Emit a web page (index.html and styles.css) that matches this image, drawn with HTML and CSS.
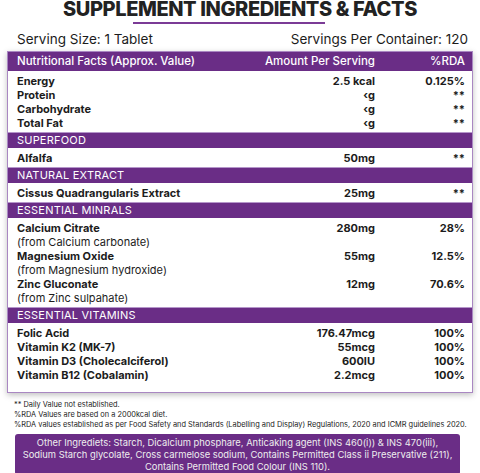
FILE: index.html
```html
<!DOCTYPE html>
<html lang="en">
<head>
    <meta charset="UTF-8">
    <meta name="viewport" content="width=device-width, initial-scale=1.0">
    <title>Supplement Facts</title>
    <link rel="stylesheet" href="styles.css">
</head>
<body>

<div class="page">
    <h1 class="title">SUPPLEMENT INGREDIENTS &amp; FACTS</h1>
    <div class="title-line"></div>

    <div class="serving">
        <span>Serving Size: 1 Tablet</span>
        <span>Servings Per Container: 120</span>
    </div>

    <div class="facts">
        <div class="head row">
            <span>Nutritional Facts (Approx. Value)</span>
            <span class="amt">Amount Per Serving</span>
            <span class="rda">%RDA</span>
        </div>

        <div class="group">
            <div class="row"><span>Energy</span><span class="amt">2.5 kcal</span><span class="rda">0.125%</span></div>
            <div class="row"><span>Protein</span><span class="amt">&lsaquo;g</span><span class="rda">**</span></div>
            <div class="row"><span>Carbohydrate</span><span class="amt">&lsaquo;g</span><span class="rda">**</span></div>
            <div class="row"><span>Total Fat</span><span class="amt">&lsaquo;g</span><span class="rda">**</span></div>
        </div>

        <div class="section">SUPERFOOD</div>
        <div class="group">
            <div class="row"><span>Alfalfa</span><span class="amt">50mg</span><span class="rda">**</span></div>
        </div>

        <div class="section">NATURAL EXTRACT</div>
        <div class="group">
            <div class="row"><span>Cissus Quadrangularis Extract</span><span class="amt">25mg</span><span class="rda">**</span></div>
        </div>

        <div class="section">ESSENTIAL MINRALS</div>
        <div class="group">
            <div class="row"><span>Calcium Citrate</span><span class="amt">280mg</span><span class="rda">28%</span></div>
            <div class="row sub"><span>(from Calcium carbonate)</span></div>
            <div class="row"><span>Magnesium Oxide</span><span class="amt">55mg</span><span class="rda">12.5%</span></div>
            <div class="row sub"><span>(from Magnesium hydroxide)</span></div>
            <div class="row"><span>Zinc Gluconate</span><span class="amt">12mg</span><span class="rda">70.6%</span></div>
            <div class="row sub"><span>(from Zinc sulpahate)</span></div>
        </div>

        <div class="section">ESSENTIAL VITAMINS</div>
        <div class="group last">
            <div class="row"><span>Folic Acid</span><span class="amt">176.47mcg</span><span class="rda">100%</span></div>
            <div class="row"><span>Vitamin K2 (MK-7)</span><span class="amt">55mcg</span><span class="rda">100%</span></div>
            <div class="row"><span>Vitamin D3 (Cholecalciferol)</span><span class="amt">600IU</span><span class="rda">100%</span></div>
            <div class="row"><span>Vitamin B12 (Cobalamin)</span><span class="amt">2.2mcg</span><span class="rda">100%</span></div>
        </div>
    </div>

    <div class="notes">
        <p>** Daily Value not established.</p>
        <p>%RDA Values are based on a 2000kcal diet.</p>
        <p>%RDA values established as per Food Safety and Standards (Labelling and Display) Regulations, 2020 and ICMR guidelines 2020.</p>
    </div>

    <div class="other">
        Other Ingrediets: Starch, Dicalcium phosphare, Anticaking agent (INS 460(i)) &amp; INS 470(iii),<br>
        Sodium Starch glycolate, Cross carmelose sodium, Contains Permitted Class ii Preservative (211),<br>
        Contains Permitted Food Colour (INS 110).
    </div>
</div>

</body>
</html>
```

FILE: styles.css
```css
*{
    padding: 0;
    margin: 0;
    box-sizing: border-box;
}

body{
    background-color: #fff;
    font-family: Inter, "Open Sans", sans-serif;
    color: #1c1c1c;
}

.page
{
    width: 480px;
    padding: 0 7px 0 7px;
}

.title
{
    font-size: 20px;
    font-weight: 800;
    text-align: center;
    line-height: 19px;
    color: #222;
    letter-spacing: -0.4px;
}

.title-line
{
    width: 192px;
    height: 2px;
    margin: 3px 0 0 126px;
    background-color: #7b3b96;
}

.serving
{
    display: flex;
    justify-content: space-between;
    font-size: 13.5px;
    padding: 6px 5px 0 10px;
    line-height: 19px;
}

.facts
{
    margin-top: 2px;
    border: 1px solid #a987c2;
    box-shadow: 0 2px 6px rgba(0, 0, 0, 0.25);
    background-color: #fff;
}

.row
{
    display: grid;
    grid-template-columns: 1fr 130px 90px;
    padding: 0 7px 0 9px;
    font-size: 11px;
    font-weight: 700;
    line-height: 14px;
}

.amt, .rda
{
    text-align: right;
}

.head
{
    background-color: #6a2d86;
    color: #fff;
    font-weight: 500;
    font-size: 11.5px;
    line-height: 19px;
}

.group
{
    padding: 3px 0 2px 0;
}

.group.last
{
    padding-bottom: 10px;
}

.sub
{
    font-weight: 400;
}

.section
{
    background-color: #6a2d86;
    color: #fff;
    font-size: 11px;
    line-height: 15px;
    padding: 0 9px;
    letter-spacing: 0.2px;
    border-top: 1px solid #b596ca;
}

.notes
{
    padding: 7px 0 0 7px;
    font-size: 7.4px;
    line-height: 10px;
    color: #222;
}

.other
{
    margin: 4px 13px 0 8px;
    background-color: #6a2d86;
    color: #eee;
    border-radius: 3px;
    text-align: center;
    font-size: 9.4px;
    line-height: 12px;
    padding: 3px 0 2px 0;
}
```
